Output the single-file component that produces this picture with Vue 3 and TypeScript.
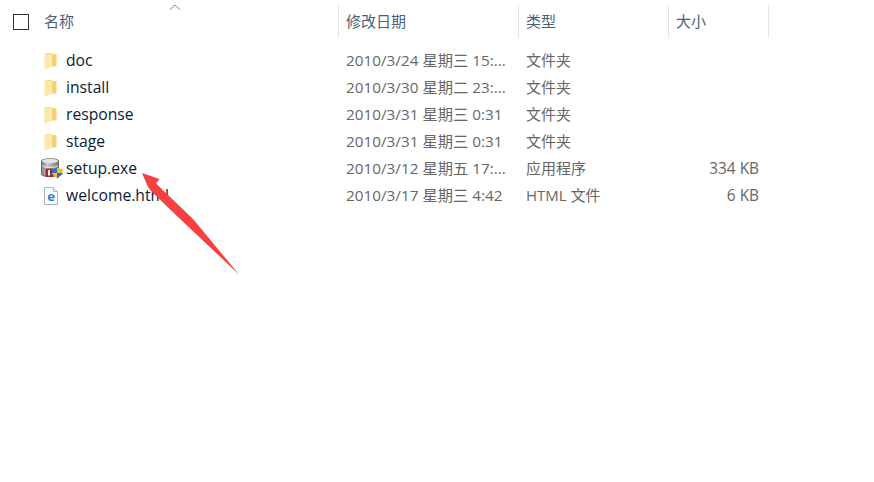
<script setup lang="ts">
interface Row { name: string; date: string; type: string; size: string; icon: 'folder' | 'exe' | 'html' }
const rows: Row[] = [
  { name: 'doc', date: '2010/3/24 星期三 15:...', type: '文件夹', size: '', icon: 'folder' },
  { name: 'install', date: '2010/3/30 星期二 23:...', type: '文件夹', size: '', icon: 'folder' },
  { name: 'response', date: '2010/3/31 星期三 0:31', type: '文件夹', size: '', icon: 'folder' },
  { name: 'stage', date: '2010/3/31 星期三 0:31', type: '文件夹', size: '', icon: 'folder' },
  { name: 'setup.exe', date: '2010/3/12 星期五 17:...', type: '应用程序', size: '334 KB', icon: 'exe' },
  { name: 'welcome.html', date: '2010/3/17 星期三 4:42', type: 'HTML 文件', size: '6 KB', icon: 'html' },
]
</script>

<template>
  <div class="page">
    <svg class="sort" width="12" height="6" viewBox="0 0 12 6"><path d="M1 5.5 L6 1 L11 5.5" fill="none" stroke="#7d8790" stroke-width="1"/></svg>
    <div class="head">
      <div class="check-cell"><span class="check"></span></div>
      <div class="hcell c-name">名称</div>
      <div class="hcell c-date">修改日期</div>
      <div class="hcell c-type">类型</div>
      <div class="hcell c-size">大小</div>
    </div>
    <div class="list">
      <div v-for="r in rows" :key="r.name" class="row">
        <div class="icon">
          <svg v-if="r.icon === 'folder'" width="13" height="18" viewBox="0 0 13 18">
            <path d="M1 1 H7 L8 2 H12.5 V14.5 H1 Z" fill="#f3d272"/>
            <path d="M0.5 1 L7.5 2 V14.5 L1.5 17.5 L0.5 17 Z" fill="#fbe8a6"/>
            <path d="M7.5 2 V14.5 H6.5 L6.5 2 Z" fill="#fdf3c9"/>
          </svg>
          <svg v-else-if="r.icon === 'exe'" width="22" height="21" viewBox="0 0 22 21">
            <defs>
              <linearGradient id="cyl" x1="0" y1="0" x2="1" y2="0">
                <stop offset="0" stop-color="#7b7d80"/>
                <stop offset="0.35" stop-color="#c9cbce"/>
                <stop offset="1" stop-color="#77797c"/>
              </linearGradient>
            </defs>
            <path d="M0.5 3 C0.5 0 17.5 0 17.5 3 V16.5 C17.5 19 0.5 19 0.5 16.5 Z" fill="url(#cyl)" stroke="#6a6a6a"/>
            <ellipse cx="9" cy="3" rx="8" ry="2.2" fill="#e2e3e5"/>
            <path d="M1 8 C5 10 13 10 17 8" fill="none" stroke="#e6e7e8"/>
            <rect x="4.5" y="10.5" width="8" height="8.5" fill="#a32a2a"/>
            <path d="M7 12.5 L9 11.5 V17.5 H7 Z" fill="#fff"/>
            <path d="M16 9.5 L21.5 11.5 V16 L16 20.5 L11 16 V11.5 Z" fill="#f2bb2f"/>
            <path d="M16 9.5 V15 H11 V11.5 Z" fill="#2b6fbd"/>
            <path d="M16 15 H21.5 V16 L16 20.5 Z" fill="#2b6fbd"/>
          </svg>
          <svg v-else width="14" height="18" viewBox="0 0 14 18">
            <path d="M0.5 0.5 H9.5 L13.5 4.5 V17.5 H0.5 Z" fill="#fafcff" stroke="#a9b4bd"/>
            <path d="M9.5 0.5 V4.5 H13.5" fill="#e8edf2" stroke="#a9b4bd"/>
            <text x="7" y="13.5" class="e">e</text>
          </svg>
        </div>
        <div class="name">{{ r.name }}</div>
        <div class="date">{{ r.date }}</div>
        <div class="type">{{ r.type }}</div>
        <div class="size">{{ r.size }}</div>
      </div>
    </div>
    <svg class="arrow" width="110" height="115" viewBox="141 170 110 115">
      <path d="M142 173 L159.5 179 L156 183.5 L193 219 L239.5 275 L178 217 L151.5 191.5 L148 187 Z" fill="#f7403f"/>
    </svg>
  </div>
</template>

<style scoped>
.page {
  position: relative;
  width: 874px;
  height: 482px;
  background: #fff;
  overflow: hidden;
  font-family: "Open Sans", "Noto Sans CJK SC", sans-serif;
  font-size: 15px;
}
.sort { position: absolute; left: 169px; top: 4px; }
.head {
  display: flex;
  height: 33px;
  position: absolute;
  top: 5px;
  left: 0;
}
.check-cell { width: 37px; padding-left: 13px; box-sizing: border-box; display: flex; align-items: center; height: 33px; }
.check { width: 14px; height: 14px; border: 1px solid #333; display: block; }
.hcell {
  height: 33px;
  line-height: 32px;
  padding-left: 7px;
  box-sizing: border-box;
  border-right: 1px solid #e5e5e5;
  color: #4c607a;
}
.c-name { width: 302px; }
.c-date { width: 180px; }
.c-type { width: 150px; }
.c-size { width: 100px; }
.list { position: absolute; top: 47px; left: 0; }
.row {
  display: flex;
  height: 27px;
  line-height: 27px;
  align-items: center;
  color: #666;
}
.icon { width: 66px; padding-left: 44px; box-sizing: border-box; height: 27px; display: flex; align-items: center; flex: none; }
.row:nth-child(5) .icon { padding-left: 41px; }
.row:nth-child(6) .icon { padding-left: 44px; }
.name { width: 273px; color: #0f1a33; font-size: 15.7px; }
.date { width: 180px; padding-left: 7px; box-sizing: border-box; white-space: nowrap; font-size: 15.3px; }
.type { width: 150px; padding-left: 7px; box-sizing: border-box; font-size: 15px; }
.size { width: 90px; text-align: right; font-size: 15.4px; }
.e { font: bold 13px "Open Sans", sans-serif; fill: #1f7fd6; text-anchor: middle; }
.arrow { position: absolute; left: 141px; top: 170px; }
</style>
